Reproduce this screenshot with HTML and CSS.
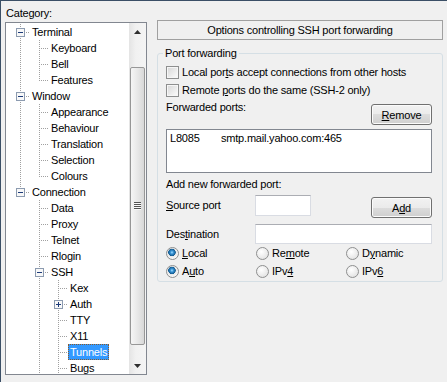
FILE: index.html
```html
<!DOCTYPE html>
<html lang="en">
<head>
    <meta charset="UTF-8">
    <title>PuTTY Configuration - Tunnels</title>
    <link rel="stylesheet" href="styles.css">
</head>
<body>
<div class="window">

    <!-- category tree -->
    <div class="category">
        <div class="cat-label">Category:</div>
        <div class="tree-box">
            <ul class="tree">
                <li class="row"><span class="ind tee"><svg width="9" height="9" viewBox="0 0 9 9"><rect x="0.5" y="0.5" width="8" height="8" fill="#f8f8f8" stroke="#8c9bb0"/><path d="M2 4.5h5" stroke="#1c3b7a"/></svg></span><span class="label">Terminal</span></li>
                <li class="row"><span class="ind pipe"></span><span class="ind tee"></span><span class="label">Keyboard</span></li>
                <li class="row"><span class="ind pipe"></span><span class="ind tee"></span><span class="label">Bell</span></li>
                <li class="row"><span class="ind pipe"></span><span class="ind elbow"></span><span class="label">Features</span></li>
                <li class="row"><span class="ind tee"><svg width="9" height="9" viewBox="0 0 9 9"><rect x="0.5" y="0.5" width="8" height="8" fill="#f8f8f8" stroke="#8c9bb0"/><path d="M2 4.5h5" stroke="#1c3b7a"/></svg></span><span class="label">Window</span></li>
                <li class="row"><span class="ind pipe"></span><span class="ind tee"></span><span class="label">Appearance</span></li>
                <li class="row"><span class="ind pipe"></span><span class="ind tee"></span><span class="label">Behaviour</span></li>
                <li class="row"><span class="ind pipe"></span><span class="ind tee"></span><span class="label">Translation</span></li>
                <li class="row"><span class="ind pipe"></span><span class="ind tee"></span><span class="label">Selection</span></li>
                <li class="row"><span class="ind pipe"></span><span class="ind elbow"></span><span class="label">Colours</span></li>
                <li class="row"><span class="ind elbow"><svg width="9" height="9" viewBox="0 0 9 9"><rect x="0.5" y="0.5" width="8" height="8" fill="#f8f8f8" stroke="#8c9bb0"/><path d="M2 4.5h5" stroke="#1c3b7a"/></svg></span><span class="label">Connection</span></li>
                <li class="row"><span class="ind"></span><span class="ind tee"></span><span class="label">Data</span></li>
                <li class="row"><span class="ind"></span><span class="ind tee"></span><span class="label">Proxy</span></li>
                <li class="row"><span class="ind"></span><span class="ind tee"></span><span class="label">Telnet</span></li>
                <li class="row"><span class="ind"></span><span class="ind tee"></span><span class="label">Rlogin</span></li>
                <li class="row"><span class="ind"></span><span class="ind tee"><svg width="9" height="9" viewBox="0 0 9 9"><rect x="0.5" y="0.5" width="8" height="8" fill="#f8f8f8" stroke="#8c9bb0"/><path d="M2 4.5h5" stroke="#1c3b7a"/></svg></span><span class="label">SSH</span></li>
                <li class="row"><span class="ind"></span><span class="ind pipe"></span><span class="ind tee"></span><span class="label">Kex</span></li>
                <li class="row"><span class="ind"></span><span class="ind pipe"></span><span class="ind tee"><svg width="9" height="9" viewBox="0 0 9 9"><rect x="0.5" y="0.5" width="8" height="8" fill="#f8f8f8" stroke="#8c9bb0"/><path d="M2 4.5h5M4.5 2v5" stroke="#1c3b7a"/></svg></span><span class="label">Auth</span></li>
                <li class="row"><span class="ind"></span><span class="ind pipe"></span><span class="ind tee"></span><span class="label">TTY</span></li>
                <li class="row"><span class="ind"></span><span class="ind pipe"></span><span class="ind tee"></span><span class="label">X11</span></li>
                <li class="row"><span class="ind"></span><span class="ind pipe"></span><span class="ind tee"></span><span class="label sel">Tunnels</span></li>
                <li class="row"><span class="ind"></span><span class="ind pipe"></span><span class="ind tee"></span><span class="label">Bugs</span></li>
            </ul>
            <div class="vscroll">
                <div class="sb-btn"><svg width="7" height="4" viewBox="0 0 7 4"><path d="M3.5 0L7 4H0z" fill="#2e2e2e"/></svg></div>
                <div class="sb-gap"></div>
                <div class="sb-thumb"><span class="grip"></span></div>
                <div class="sb-rest"></div>
                <div class="sb-btn"><svg width="7" height="4" viewBox="0 0 7 4"><path d="M0 0H7L3.5 4z" fill="#2e2e2e"/></svg></div>
            </div>
        </div>
    </div>

    <!-- options panel -->
    <div class="panel">
        <div class="panel-title">Options controlling SSH port forwarding</div>
        <fieldset class="group">
            <legend>Port forwarding</legend>

            <div class="check-row"><span class="check"></span><span>Local por<u>t</u>s accept connections from other hosts</span></div>
            <div class="check-row"><span class="check"></span><span>Remote <u>p</u>orts do the same (SSH-2 only)</span></div>

            <div class="fwd-row">
                <span class="fwd-label">Forwarded ports:</span>
                <button class="btn btn-remove"><u>R</u>emove</button>
            </div>
            <div class="port-list">
                <div class="port-item"><span class="port-src">L8085</span><span>smtp.mail.yahoo.com:465</span></div>
            </div>

            <div class="add-label">Add new forwarded port:</div>
            <div class="field-row">
                <span class="field-label"><u>S</u>ource port</span>
                <span class="input input-src"></span>
                <button class="btn btn-add">A<u>d</u>d</button>
            </div>
            <div class="field-row dest-row">
                <span class="field-label dest-label">Des<u>t</u>ination</span>
                <span class="input input-dest"></span>
            </div>

            <div class="radio-row">
                <span class="radio"><span class="dot on"></span><span><u>L</u>ocal</span></span>
                <span class="radio"><span class="dot"></span><span>Re<u>m</u>ote</span></span>
                <span class="radio"><span class="dot"></span><span>D<u>y</u>namic</span></span>
            </div>
            <div class="radio-row">
                <span class="radio"><span class="dot on"></span><span>A<u>u</u>to</span></span>
                <span class="radio"><span class="dot"></span><span>IPv<u>4</u></span></span>
                <span class="radio"><span class="dot"></span><span>IPv<u>6</u></span></span>
            </div>
        </fieldset>
    </div>

</div>
</body>
</html>
```

FILE: styles.css
```css
body {
    margin: 0;
    background: #f0f0f0;
    font-family: "Liberation Sans", Arial, sans-serif;
    font-size: 11px;
    letter-spacing: -0.2px;
    color: #000;
}
.window {
    display: flex;
    width: 446px;
    height: 381px;
    border-top: 1px solid #3b4f66;
    border-left: 1px solid #3b4f66;
    background: #f0f0f0;
    overflow: hidden;
}

/* category tree */
.category {
    width: 142px;
    margin-left: 4px;
}
.cat-label {
    margin: 6px 0 2px;
    padding-left: 1px;
    line-height: 13px;
}
.tree-box {
    display: flex;
    height: 353px;
    box-sizing: border-box;
    border: 1px solid #828790;
    background: #fff;
}
.tree {
    --v: repeating-linear-gradient(to bottom, #a0a0a0 0 1px, transparent 1px 2px);
    --h: repeating-linear-gradient(to right, #a0a0a0 0 1px, transparent 1px 2px);
    flex: 1;
    margin: 0;
    padding: 1px 0 0 5px;
    list-style: none;
    overflow: hidden;
}
.row {
    display: flex;
    height: 16px;
}
.ind {
    flex: none;
    width: 19px;
    height: 16px;
}
.ind svg {
    display: block;
    margin: 4px 0 0 5px;
}
.pipe {
    background: var(--v) 9px 0 / 1px 16px no-repeat;
}
.tee {
    background: var(--v) 9px 0 / 1px 16px no-repeat, var(--h) 9px 8px / 10px 1px no-repeat;
}
.elbow {
    background: var(--v) 9px 0 / 1px 9px no-repeat, var(--h) 9px 8px / 10px 1px no-repeat;
}
.label {
    padding: 0 2px;
    height: 16px;
    line-height: 16px;
    white-space: nowrap;
    box-sizing: border-box;
}
.label.sel {
    background: #3399ff;
    color: #fff;
    outline: 1px dotted #8a5a2a;
    outline-offset: -1px;
}

/* scrollbar */
.vscroll {
    flex: none;
    width: 17px;
    display: flex;
    flex-direction: column;
    background: linear-gradient(to right, #e4e4e4, #f1f1f1 40%, #f4f4f4);
}
.sb-btn {
    height: 17px;
    display: flex;
    align-items: center;
    justify-content: center;
}
.sb-gap {
    height: 27px;
}
.sb-thumb {
    height: 278px;
    margin: 0 1px;
    box-sizing: border-box;
    border: 1px solid #979797;
    border-radius: 2px;
    background: linear-gradient(to right, #f6f6f6, #e8e8e8 50%, #d8d8d8);
    display: flex;
    align-items: center;
    justify-content: center;
}
.grip {
    width: 7px;
    height: 8px;
    background: repeating-linear-gradient(to bottom, #555 0 1px, #fafafa 1px 2px);
}
.sb-rest {
    flex: 1;
}

/* options panel */
.panel {
    width: 286px;
    margin: 19px 0 0 10px;
}
.panel-title {
    height: 20px;
    box-sizing: border-box;
    border: 1px solid #a0a0a0;
    text-align: center;
    line-height: 18px;
}
.group {
    margin: 7px 0 0;
    padding: 3px 10px 1px 8px;
    border: 1px solid #d5dfe5;
    border-radius: 3px;
}
.group legend {
    margin-left: -3px;
    padding: 0 2px;
    line-height: 13px;
}
.check-row {
    display: flex;
    align-items: center;
    height: 18px;
}
.check {
    width: 13px;
    height: 13px;
    box-sizing: border-box;
    margin-right: 3px;
    border: 1px solid #8e8f8f;
    box-shadow: inset 0 0 0 1px #f6f6f6;
    background: linear-gradient(135deg, #d6d6d6, #fdfdfd);
}
.fwd-row {
    display: flex;
    justify-content: space-between;
    align-items: flex-start;
    margin-top: 2px;
}
.fwd-label {
    line-height: 13px;
}
.btn {
    width: 61px;
    height: 21px;
    padding: 0;
    box-sizing: border-box;
    font: inherit;
    letter-spacing: inherit;
    color: #000;
    border: 1px solid #707070;
    border-radius: 3px;
    box-shadow: inset 0 0 0 1px #fbfbfb;
    background: linear-gradient(#f2f2f2 0%, #ebebeb 50%, #dddddd 50%, #cfcfcf 100%);
}
.btn-remove {
    margin-top: 3px;
}
.port-list {
    margin-top: 4px;
    height: 44px;
    box-sizing: border-box;
    border: 1px solid #828790;
    background: #fff;
    padding: 2px 3px;
}
.port-item {
    display: flex;
    line-height: 13px;
}
.port-src {
    width: 51px;
}
.add-label {
    margin-top: 5px;
    line-height: 13px;
}
.field-row {
    display: flex;
    align-items: flex-start;
    margin-top: 4px;
}
.field-label {
    width: 89px;
    line-height: 21px;
}
.input {
    box-sizing: border-box;
    background: #fff;
    border: 1px solid #d9dce3;
    border-top-color: #abadb3;
}
.input-src {
    width: 56px;
    height: 21px;
}
.btn-add {
    margin: 2px 0 0 auto;
}
.dest-row {
    margin-top: 6px;
}
.dest-label {
    line-height: 20px;
}
.input-dest {
    flex: 1;
    height: 20px;
}
.radio-row {
    display: grid;
    grid-template-columns: 90px 90px 1fr;
    height: 18px;
}
.radio-row:first-of-type {
    margin-top: 2px;
}
.radio {
    display: flex;
    align-items: center;
}
.dot {
    width: 13px;
    height: 13px;
    box-sizing: border-box;
    margin-right: 3px;
    border: 1px solid #8e8f8f;
    border-radius: 50%;
    background: radial-gradient(circle at 40% 35%, #ffffff, #dcdcdc);
}
.dot.on {
    background: radial-gradient(circle at 45% 40%, #a8e0ff 0, #3a96d8 1.5px, #125a90 3.5px, #e8e8e8 4px, #f7f7f7 6px);
}
```
